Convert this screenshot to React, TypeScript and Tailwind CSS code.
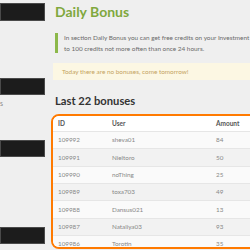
import React from "react";

const rows = [
  ["109992", "sheva01", "84"],
  ["109991", "Nieltoro", "50"],
  ["109990", "noThing", "25"],
  ["109989", "toxa703", "49"],
  ["109988", "Dansus021", "13"],
  ["109987", "Nataliya03", "93"],
  ["109986", "Torotin", "35"],
];

export default function App() {
  return (
    <div
      className="w-[250px] h-[250px] overflow-hidden bg-[#efefef] flex"
      style={{ fontFamily: "Lato, 'Open Sans', sans-serif" }}
    >
      <div className="w-[51px] shrink-0">
        <div className="mt-[3px] h-[18px] w-[45px] bg-[#1c1c1c] border border-[#4a4a4a]" />
        <div className="mt-[57px] h-[17px] w-[45px] bg-[#1c1c1c] border border-[#4a4a4a]" />
        <div className="mt-[3px] text-[7px] leading-[10px] text-[#888]">s</div>
        <div className="mt-[32px] h-[17px] w-[45px] bg-[#1c1c1c] border border-[#4a4a4a]" />
        <div className="mt-[70px] h-[17px] w-[45px] bg-[#1c1c1c] border border-[#4a4a4a]" />
      </div>
      <div className="flex-1 min-w-0">
        <div className="ml-[4px] mt-[2px] text-[14px] leading-[20px] font-bold text-[#80a83e] whitespace-nowrap">
          Daily Bonus
        </div>
        <div className="ml-[4px] mt-[11px] border-l-[3px] border-[#8cb84a] pl-[6px] h-[20px] flex flex-col justify-center">
          <div className="text-[6.4px] leading-[11px] text-[#6a6a6a] whitespace-nowrap">
            In section Daily Bonus you can get free credits on your Investment Balance. Up
          </div>
          <div className="text-[6.4px] leading-[11px] text-[#6a6a6a] whitespace-nowrap">
            to 100 credits not more often than once 24 hours.
          </div>
        </div>
        <div className="ml-[2px] mt-[10px] h-[17px] bg-[#fcf7e3] flex items-center pl-[9px] text-[6.4px] text-[#c4a35e] whitespace-nowrap">
          Today there are no bonuses, come tomorrow!
        </div>
        <div className="ml-[4px] mt-[14px] text-[11.2px] leading-[14px] font-bold text-[#333] whitespace-nowrap">
          Last 22 bonuses
        </div>
        <div className="mt-[6px] w-[230px] h-[135px] border-2 border-[#ff7a00] rounded-[8px] overflow-hidden bg-white">
          <div className="h-[15px] flex items-center text-[6.5px] font-bold text-[#555] bg-white">
            <div className="w-[59px] pl-[5px]">ID</div>
            <div className="w-[104px]">User</div>
            <div>Amount</div>
          </div>
          {rows.map((r, i) => (
            <div
              key={r[0]}
              className={`h-[17.33px] flex items-center text-[6.3px] text-[#888] border-t border-[#e6e6e6] ${
                i % 2 === 0 ? "bg-[#fafafa]" : "bg-[#f2f2f2]"
              }`}
            >
              <div className="w-[59px] pl-[5px]">{r[0]}</div>
              <div className="w-[104px]">{r[1]}</div>
              <div>{r[2]}</div>
            </div>
          ))}
        </div>
      </div>
    </div>
  );
}
